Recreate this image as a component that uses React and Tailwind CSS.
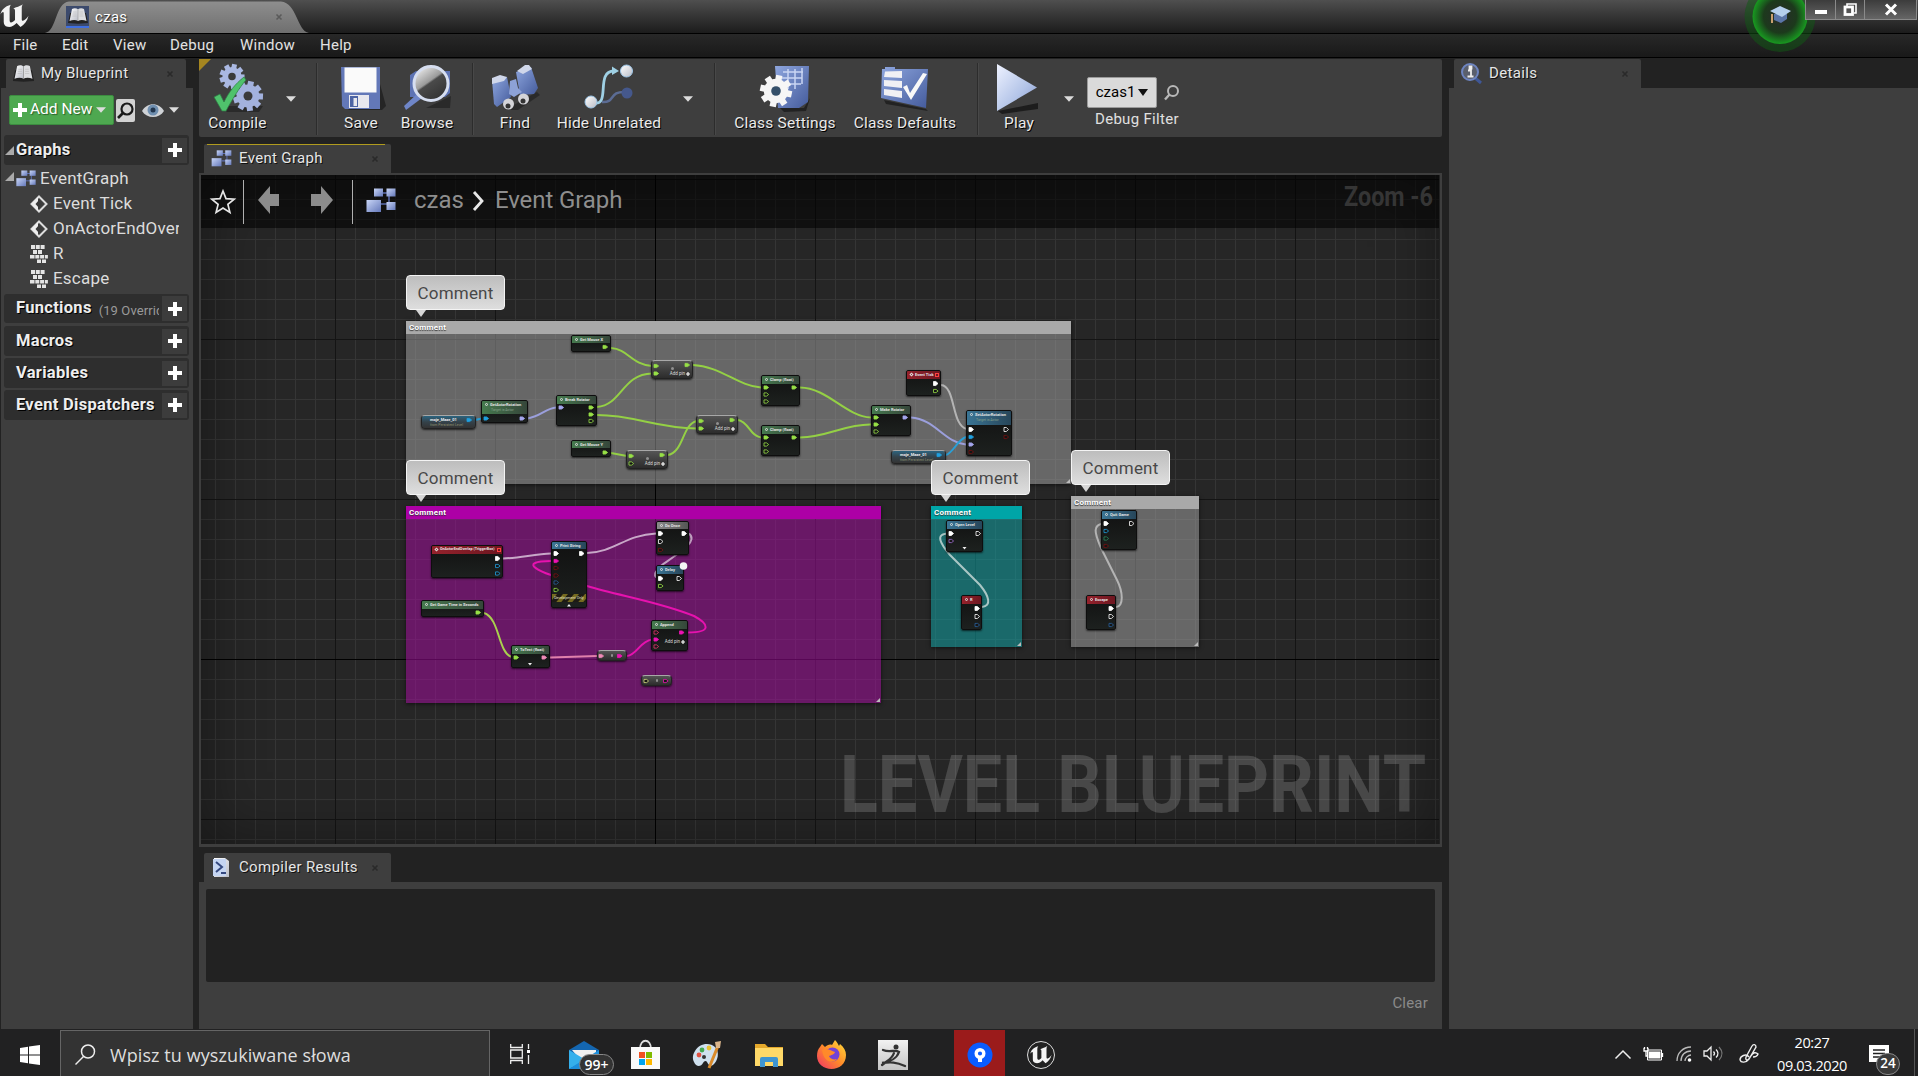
import React from "react";

/* ---------- shared glyphs ---------- */
const Svg = ({ w, h, vb, children, className = "" }) => (
  <svg width={w} height={h} viewBox={vb || `0 0 ${w} ${h}`} className={`block shrink-0 overflow-visible ${className}`}>
    {children}
  </svg>
);

const Defs = () => (
  <svg width="0" height="0" className="absolute">
    <defs>
      <linearGradient id="blue" x1="0" y1="0" x2="1" y2="1">
        <stop offset="0" stopColor="#c9d6f7" />
        <stop offset="1" stopColor="#6478ba" />
      </linearGradient>
      <linearGradient id="deep" x1="0" y1="0" x2="1" y2="1">
        <stop offset="0" stopColor="#8ea6de" />
        <stop offset="1" stopColor="#445b9c" />
      </linearGradient>
      <linearGradient id="white" x1="0" y1="0" x2="1" y2="1">
        <stop offset="0" stopColor="#ffffff" />
        <stop offset="1" stopColor="#b9bcc6" />
      </linearGradient>
      <linearGradient id="play" x1="0" y1="0" x2="1" y2="1">
        <stop offset="0" stopColor="#eef2ff" />
        <stop offset="0.6" stopColor="#b3c4e8" />
        <stop offset="1" stopColor="#8497cc" />
      </linearGradient>
      <linearGradient id="lens" x1="0" y1="0" x2="0.7" y2="1">
        <stop offset="0" stopColor="#ffffff" />
        <stop offset="0.5" stopColor="#9a9a9a" />
        <stop offset="0.55" stopColor="#4a4a4a" />
        <stop offset="1" stopColor="#333" />
      </linearGradient>
      <radialGradient id="glow">
        <stop offset="0" stopColor="#2a2a2a" />
        <stop offset="0.6" stopColor="#1c3a1c" />
        <stop offset="1" stopColor="#189a20" />
      </radialGradient>
      <linearGradient id="fox" x1="1" y1="0" x2="0" y2="1">
        <stop offset="0" stopColor="#ffe03a" />
        <stop offset="0.5" stopColor="#ff8a2a" />
        <stop offset="1" stopColor="#f0306a" />
      </linearGradient>
      <pattern id="stripes" width="11" height="8" patternUnits="userSpaceOnUse" patternTransform="skewX(-40)">
        <rect width="11" height="8" fill="#1d1a14" />
        <rect width="5" height="8" fill="#756a20" />
      </pattern>
    </defs>
  </svg>
);

const Arrow = ({ className = "" }) => (
  <Svg w={10} h={6} className={className}>
    <path d="M0 0.3h10L5 5.8z" fill="#dcdcdc" />
  </Svg>
);

const Plus = ({ s = 14 }) => (
  <Svg w={s} h={s} vb="0 0 14 14">
    <path d="M5 0h4v5h5v4H9v5H5V9H0V5h5z" fill="#fff" />
  </Svg>
);

const UMark = ({ w, h }) => (
  <Svg w={w} h={h} vb="0 0 28 24">
    <path
      d="M0.5 11C1 7 4.500 3 10.500 1.500C9.500 3 9.300 4 9.300 6V16.500C9.300 18.300 10.300 19 11.600 18.600C12.800 18.200 13.700 17.400 14.500 16.400V7.500C14.500 6 13.700 5.500 12.800 5.600C14.500 4 18.500 3.800 22 1.200C21.200 2.600 21 3.800 21 5V15.500C21 17 22 17.400 23.200 16.700C24.800 15.900 26.200 14.500 27.500 12.300C26.400 17.500 23.400 20.800 19.800 23L16 19.200C13.800 21.700 10.800 23.400 7.400 22.900C4.600 22.400 3.600 20.600 3.600 18V9.800C3.600 8 2 8.300 0.500 11Z"
      fill="#f4f4f4"
    />
  </Svg>
);

const Blocks = ({ w = 21, h = 17 }) => (
  <Svg w={w} h={h} vb="0 0 30 25">
    <path d="M13 5h14M15 16h12M23 8v10" stroke="#5c6db0" strokeWidth="1.500" />
    <rect x="8" y="0.500" width="9" height="8" fill="url(#blue)" />
    <rect x="20.500" y="0.500" width="9" height="8" fill="url(#blue)" />
    <rect x="0.500" y="12" width="14.500" height="12" fill="url(#blue)" />
    <rect x="20.500" y="14" width="9" height="8" fill="url(#blue)" />
  </Svg>
);

const Book = ({ w = 18, h = 16 }) => (
  <Svg w={w} h={h} vb="0 0 18 16">
    <path d="M-1 15L1 5L9 4.500L17 5L19 15L9 15.800z" fill="#222" />
    <path d="M3 1C5 -0.300 7.500 0 9 1.300V13C7 11.700 3.500 11.700 0.500 13z" fill="url(#white)" />
    <path d="M15 1C13 -0.300 10.500 0 9 1.300V13C11 11.700 14.500 11.700 17.500 13z" fill="#dcdde0" />
    <path d="M4 4h3.500M3.700 6h3.800M3.500 8h4M10.500 4H14M10.500 6h3.700M10.500 8h4" stroke="#b4b4b4" strokeWidth="0.500" />
    <path d="M9 1.300v11.700" stroke="#999" strokeWidth="0.600" />
  </Svg>
);

const Cross = ({ c = "#2a2a2a" }) => (
  <Svg w={6} h={6}>
    <path d="M0.500 0.500l5 5M5.500 0.500l-5 5" stroke={c} strokeWidth="1.600" />
  </Svg>
);

const Gear = ({ cx, cy, r, fill, hole = "#3a3a3a", n = 8 }) => (
  <g>
    {Array.from({ length: n }, (_, i) => (
      <rect key={i} x={cx - r * 0.2} y={cy - r} width={r * 0.4} height={r} fill={fill} transform={`rotate(${(i * 360) / n + 12} ${cx} ${cy})`} />
    ))}
    <circle cx={cx} cy={cy} r={r * 0.76} fill={fill} />
    <circle cx={cx} cy={cy} r={r * 0.3} fill={hole} />
  </g>
);

/* ---------- toolbar icons ---------- */
const icons = {
  compile: (
    <Svg w={50} h={48}>
      <path d="M8 42h42l-4 6H14z" fill="#222" opacity="0.7" />
      <Gear cx={19} cy={12.500} r={12.500} fill="#aab8e2" n={9} />
      <Gear cx={35} cy={32} r={15} fill="#a3b2de" n={9} />
      <path d="M1 33l6-3 4 8C16 28 22 20 31 13l2 3C26 24 19 36 13 47H9z" fill="#4fc26c" stroke="#2b7d42" strokeWidth="0.700" />
    </Svg>
  ),
  save: (
    <Svg w={46} h={48}>
      <path d="M40 20l6 22-4 4H8z" fill="#1f1f1f" opacity="0.8" />
      <path d="M1 3h39v42H5l-3-3z" fill="#6378b8" />
      <rect x="4.500" y="3.500" width="32" height="25" fill="#fafafa" />
      <rect x="9" y="31" width="20" height="13" fill="#e8e8ee" />
      <rect x="10" y="32" width="8" height="11" fill="#4d64a4" />
      <rect x="13.500" y="34" width="3.500" height="8" fill="#e8e8ee" />
    </Svg>
  ),
  browse: (
    <Svg w={50} h={48}>
      <path d="M24 44h24l1-12z" fill="#222" opacity="0.7" />
      <path d="M8 11l6-4h34v22l-5 4H8z" fill="#5d73b4" />
      <path d="M16 29L2 42l2 4L20 34z" fill="#6f86c8" />
      <circle cx="29" cy="19.500" r="17" fill="url(#lens)" stroke="#d6def0" strokeWidth="3" />
    </Svg>
  ),
  find: (
    <Svg w={50} h={48}>
      <path d="M14 46l32-18 3 3-22 15z" fill="#222" opacity="0.7" />
      <path d="M1 16l15-3 4 20-14 10-3-3z" fill="url(#deep)" />
      <path d="M25 8l15-5 7 21-4 6-14 1z" fill="url(#deep)" />
      <path d="M1 14l8-3 7 2-3 4-12 3z" fill="#d0d7ea" />
      <path d="M26 7l8-6h4l3 4-9 5z" fill="#d0d7ea" />
      <path d="M19 17l6-2 2 9 4 4-8 5-5-3z" fill="#8da2d6" />
      <circle cx="17.500" cy="40" r="5.500" fill="#d4d4d8" /><circle cx="17" cy="42" r="2.500" fill="#333" />
      <circle cx="32.500" cy="35" r="5.500" fill="#d4d4d8" /><circle cx="32" cy="37" r="2.500" fill="#333" />
    </Svg>
  ),
  hide: (
    <Svg w={50} h={48}>
      <path d="M18 38c14 1 6-11 24-10" fill="none" stroke="#5b6c94" strokeWidth="2.500" />
      <circle cx="43" cy="29" r="5.500" fill="#45588c" />
      <path d="M10 39C27 42 11 7 30 7" fill="none" stroke="#9fd0e4" strokeWidth="2.800" />
      <path d="M28 2.500l7 4.500-7 4z" fill="#9fd0e4" />
      <circle cx="42.500" cy="7" r="6" fill="url(#white)" stroke="#9cc6e8" />
      <circle cx="7" cy="38" r="6" fill="url(#white)" stroke="#9cc6e8" />
    </Svg>
  ),
  settings: (
    <Svg w={50} h={48}>
      <path d="M20 44h24l6-10-4 13-22 1z" fill="#222" />
      <path d="M15 2h34l-1 36-9 6H18z" fill="url(#deep)" />
      <path d="M23 8h20M22 14h20M22 20h19M28 5v20M35 5v20M42 4v16" stroke="#c9d5f3" strokeWidth="1.500" />
      <Gear cx={16} cy={27} r={16} fill="#f6f6f6" hole="#35506a" />
    </Svg>
  ),
  defaults: (
    <Svg w={50} h={48}>
      <path d="M4 36l42 9 2 2-42-7z" fill="#222" />
      <path d="M2 5h3V3h10v2h33l-2 39L1 34z" fill="url(#deep)" />
      <path d="M5 7.500l17-0.500v7l-18-1zM4 16l18 1v7L4 22zM4 25l18 2v7L4 31z" fill="#f0f0f4" />
      <path d="M23 23l4-2 3 8L43 9l4 1-16 26z" fill="#f8f8f8" />
    </Svg>
  ),
  play: (
    <Svg w={46} h={50}>
      <path d="M4 47L44 39v6L8 50z" fill="#1d1d1d" />
      <path d="M3 0L43 23.500L3 47z" fill="url(#play)" />
    </Svg>
  ),
};

/* ---------- chrome ---------- */
const TitleBar = () => (
  <div className="relative flex h-[33px] items-start bg-gradient-to-b from-[#4f4f4f] to-[#1c1c1c]">
    <div className="pt-[3px]"><UMark w={29} h={25} /></div>
    <div className="relative ml-4 mt-[1px] flex h-8 w-[264px] items-center">
      <Svg w={264} h={32} className="absolute left-0 top-0">
        <linearGradient id="tabg" x1="0" y1="0" x2="0" y2="1">
          <stop offset="0" stopColor="#8e8e8e" />
          <stop offset="1" stopColor="#6f6f6f" />
        </linearGradient>
        <path d="M0 32C12 30 10 2 24 0.500H236C252 2 252 30 264 32z" fill="url(#tabg)" />
      </Svg>
      <div className="relative ml-[21px] flex h-[22px] w-[23px] items-center justify-center border-b-2 border-[#3f6fe0] bg-[#3c4a6c]"><Book w={18} h={16} /></div>
      <span className="relative ml-[6px] text-[15px] tracking-[0.3px] text-white [text-shadow:1px_1px_1px_#222]">czas</span>
      <div className="relative ml-auto mr-[27px]"><Cross c="#5a5a5a" /></div>
    </div>
    <div className="ml-auto flex h-5">
      <div className="relative z-10 flex h-5 w-[31px] items-center justify-center border border-t-0 border-[#8a8a8a] bg-gradient-to-b from-[#3c3c3c] to-[#666]"><div className="mt-1 h-[4px] w-3 bg-white" /></div>
      <div className="flex h-5 w-[29px] items-center justify-center border border-l-0 border-t-0 border-[#8a8a8a] bg-gradient-to-b from-[#3c3c3c] to-[#666]">
        <Svg w={14} h={14}>
          <path d="M4 3V1h9v9h-2" fill="none" stroke="#fff" strokeWidth="1.600" />
          <rect x="2" y="4" width="7.500" height="7.500" fill="none" stroke="#fff" strokeWidth="2.800" />
        </Svg>
      </div>
      <div className="mr-[1px] flex h-5 w-[52px] items-center justify-center border border-l-0 border-t-0 border-[#8a8a8a] bg-gradient-to-b from-[#3c3c3c] to-[#666]">
        <Svg w={12} h={11}><path d="M1 0.500l10 10M11 0.500l-10 10" stroke="#fff" strokeWidth="3" /></Svg>
      </div>
    </div>
    <div className="absolute right-[102px] top-0 h-[54px] w-[72px] overflow-hidden">
      <svg width="72" height="54" viewBox="0 0 72 54">
        <circle cx="36" cy="16.500" r="35.500" fill="#0f5a14" opacity="0.5" />
        <circle cx="36" cy="16.500" r="27.500" fill="url(#glow)" />
        <path d="M28 23v-9" stroke="#c9a070" strokeWidth="2" />
        <path d="M30 14v6l7 3 6-4v-5z" fill="#5b76a8" />
        <path d="M26 11l10-5 11 5-9 6z" fill="#b5d0ee" />
      </svg>
    </div>
  </div>
);

const MENU = [
  ["File", "w-[49px]"],
  ["Edit", "w-[51px]"],
  ["View", "w-[57px]"],
  ["Debug", "w-[70px]"],
  ["Window", "w-[80px]"],
  ["Help", "w-[60px]"],
];

const DockTab = ({ icon, label, width, active }) => (
  <div className={`relative flex h-[29px] items-center rounded-t-[2px] bg-[#3e3e3e] ${width}`}>
    {active && <div className="absolute left-[3px] right-[6px] top-0 h-[1px] bg-[#b09b1e]" />}
    <div className="ml-[7px] flex w-[21px] justify-center">{icon}</div>
    <span className="ml-[7px] whitespace-nowrap text-[15px] tracking-[0.33px] text-[#e6e6e6] [text-shadow:1px_1px_0_#111]">{label}</span>
    <div className="ml-auto mr-[13px]"><Cross /></div>
  </div>
);

const Section = ({ label, extra, open, className = "" }) => (
  <div className={`ml-[3px] mr-1 flex items-center rounded-[3px] bg-[#2e2e2e] ${className}`}>
    <div className="w-3 shrink-0">{open && <Svg w={9} h={9} className="ml-[1px]"><path d="M9 0v9H0z" fill="#aaa" /></Svg>}</div>
    <span className="whitespace-nowrap text-[16.500px] font-bold tracking-[0.3px] text-[#eee] [text-shadow:1px_1px_0_#000]">{label}</span>
    {extra && <span className="ml-[7px] mt-1 w-[60px] overflow-hidden whitespace-nowrap text-[13px] tracking-[0.1px] text-[#9a9a9a]">{extra}</span>}
    <div className="ml-auto mr-[2px] flex h-[25px] w-[25px] shrink-0 items-center justify-center bg-[#3c3c3c]"><Plus /></div>
  </div>
);

const Diamond = () => (
  <Svg w={18} h={18}>
    <path d="M9 1.500L16.500 9L9 16.500L1.500 9z" fill="none" stroke="#ddd" strokeWidth="2" />
    <path d="M8 2L1.500 9L8 16z" fill="#eee" /><path d="M9 5L13 9L9 13L5.500 9z" fill="#3a3a3a" />
  </Svg>
);
const Keys = () => (
  <Svg w={18} h={18}>
    <path d="M1 0h4v4H1zM5.800 0h4v4h-4zM10.600 0h4v4h-4zM3 5h4v4H3zM8 5h4v4H8zM0 10h4.500v3.600H0zM5.300 10h4v3.600h-4zM10.100 10h4v3.600h-4zM14.900 10h3v3.600h-3zM7 14.500h4v3.500H7zM12 14.500h4v3.500h-4z" fill="#e4e4e4" />
  </Svg>
);

const LeftPanel = () => (
  <div className="flex w-[193px] shrink-0 flex-col pl-[1px] pt-[1px]">
    <div className="pl-[5px]"><DockTab width="w-[180px]" label="My Blueprint" icon={<Book w={19} h={17} />} /></div>
    <div className="flex flex-1 flex-col bg-[#3e3e3e]">
      <div className="mt-[7px] flex h-[30px] items-center pl-2">
        <div className="flex h-[30px] w-[105px] items-center rounded-[2px] border border-[#3c8c40] bg-[#4ea850] pl-[3px]">
          <Plus />
          <span className="ml-[3px] whitespace-nowrap text-[15.500px] text-white [text-shadow:1px_1px_1px_#2a602a]">Add New</span>
          <Arrow className="ml-[4px]" />
        </div>
        <div className="ml-[2px] flex h-[23px] w-[19px] items-center justify-center rounded-[2px] bg-[#d2d2d2]">
          <Svg w={17} h={17}><circle cx="10" cy="7" r="5.500" fill="none" stroke="#1a1a1a" strokeWidth="2.200" /><path d="M6 11l-5 5" stroke="#1a1a1a" strokeWidth="2.600" /></Svg>
        </div>
        <Svg w={22} h={15} className="ml-[7px]">
          <path d="M0 8C5-1 17-1 22 8C17 16 5 16 0 8z" fill="#cfd2d6" /><circle cx="11" cy="7" r="5.500" fill="#6f8fb0" /><circle cx="11" cy="7" r="2.500" fill="#22364e" />
        </Svg>
        <Arrow className="ml-[5px]" />
      </div>
      <Section label="Graphs" open className="mt-[10px] h-[30px]" />
      <div className="flex h-[129px] flex-col pt-[1px]">
        <div className="flex h-[25px] items-center pl-[4px]">
          <Svg w={9} h={9} className="mb-1"><path d="M9 0v9H0z" fill="#aaa" /></Svg>
          <div className="ml-[2px]"><Blocks w={20} h={17} /></div>
          <span className="ml-[4px] text-[17px] tracking-[0.2px] text-[#dcdcdc]">EventGraph</span>
        </div>
        {[["Event Tick", 0], ["OnActorEndOverlap", 0], ["R", 1], ["Escape", 1]].map(([t, k]) => (
          <div key={t} className="flex h-[25px] items-center pl-[29px]">
            {k ? <Keys /> : <Diamond />}
            <span className="ml-[5px] w-[126px] overflow-hidden whitespace-nowrap text-[17px] tracking-[0.2px] text-[#dcdcdc]">{t}</span>
          </div>
        ))}
      </div>
      <Section label="Functions" extra="(19 Overridable)" className="h-[29px]" />
      <Section label="Macros" className="mt-[3px] h-[30px]" />
      <Section label="Variables" className="mt-[2px] h-[30px]" />
      <Section label="Event Dispatchers" className="mt-[2px] h-[30px]" />
    </div>
  </div>
);

const Tool = ({ icon, label, className, pad = "" }) => (
  <div className={`flex shrink-0 flex-col items-center ${className}`}>
    <div className={`flex h-[56px] items-start pt-[5px] ${pad}`}>{icons[icon]}</div>
    <span className="-mt-[2px] h-5 whitespace-nowrap text-[15.500px] leading-5 tracking-[0.2px] text-[#eaeaea] [text-shadow:1px_1px_0_#000]">{label}</span>
  </div>
);
const Sep = ({ className = "" }) => <div className={`mt-1 h-[72px] w-[2px] shrink-0 border-r border-[#484848] bg-[#2c2c2c] ${className}`} />;

const Toolbar = () => (
  <div className="relative flex h-[78px] items-start rounded-[2px] bg-[#3e3e3e]">
    <Svg w={12} h={12} className="absolute left-0 top-0"><path d="M0 0h12L0 12z" fill="#a58620" /></Svg>
    <Tool icon="compile" label="Compile" className="ml-[4px] w-[69px]" />
    <Arrow className="ml-[14px] mt-[37px]" />
    <Sep className="ml-[20px]" />
    <Tool icon="save" label="Save" className="ml-[12px] w-[62px]" pad="pl-[4px]" />
    <Tool icon="browse" label="Browse" className="w-[70px]" />
    <Sep className="ml-[10px]" />
    <Tool icon="find" label="Find" className="ml-[11px] w-[60px]" pad="pl-[2px]" />
    <Tool icon="hide" label="Hide Unrelated" className="ml-[3px] w-[122px]" />
    <Arrow className="ml-[13px] mt-[37px]" />
    <Sep className="ml-[21px]" />
    <Tool icon="settings" label="Class Settings" className="ml-[9px] w-[120px]" />
    <Tool icon="defaults" label="Class Defaults" className="w-[120px]" />
    <Sep className="ml-[12px]" />
    <Tool icon="play" label="Play" className="ml-[8px] w-[64px]" pad="pr-[4px]" />
    <Arrow className="ml-[13px] mt-[37px]" />
    <div className="ml-[13px] mt-[18px] flex flex-col">
      <div className="flex items-center">
        <div className="flex h-[31px] w-[70px] items-center justify-center gap-[3px] rounded-[2px] border border-[#9a9a9a] bg-[#dadada] text-[15px] text-black">
          czas1
          <Svg w={10} h={7}><path d="M0 0h10L5 7z" fill="#111" /></Svg>
        </div>
        <Svg w={15} h={16} className="ml-[7px]"><circle cx="9" cy="6" r="5" fill="none" stroke="#b8b8b8" strokeWidth="2" /><path d="M5.500 9.500l-4.500 5" stroke="#b8b8b8" strokeWidth="2.400" /></Svg>
      </div>
      <span className="ml-[8px] mt-[2px] whitespace-nowrap text-[15px] leading-[18px] tracking-[0.3px] text-[#e0e0e0]">Debug Filter</span>
    </div>
  </div>
);

/* ---------- graph ---------- */
const OX = 201;
const OY = 175;

const C = {
  g: "#97e046", w: "#ffffff", b: "#1fa0e0", l: "#a4a6ee", r: "#7a1010", m: "#ee12b4", p: "#f08ab8", n: "#2a62a0", y: "#d8e080", t: "#2a8a60", v: "#a070d0", k: "#e83870",
};

const HEAD = {
  green: "bg-gradient-to-r from-[#457a4e] to-[#35463a]",
  blue: "bg-gradient-to-r from-[#3a7595] to-[#27465a]",
  red: "bg-gradient-to-r from-[#95222c] to-[#6d1620]",
  gray: "bg-gradient-to-r from-[#8a8a8a] to-[#555]",
};

const COMMENTS = [
  { x: 406, y: 321, w: 665, h: 163, head: "bg-[#a9a9a9]", body: "bg-[#a8a8a8]/50", bx: 406, by: 275 },
  { x: 406, y: 505.5, w: 475, h: 197, head: "bg-[#ad00a6]", body: "bg-[#a00c9a]/55", bx: 406, by: 460 },
  { x: 931, y: 505.5, w: 90.5, h: 141, head: "bg-[#00a5a7]", body: "bg-[#10a0a2]/55", bx: 931, by: 460 },
  { x: 1071, y: 495.5, w: 127.5, h: 151, head: "bg-[#a9a9a9]", body: "bg-[#a8a8a8]/50", bx: 1071, by: 450 },
];

/* Pins: [x, y, colour, hollow]; coordinates are in canvas space. */
const NODES = [
  { x: 571, y: 335, w: 40, h: 17, hd: 7, c: "green", t: "Get Mouse X", pins: [[605, 347, "g"]] },
  { x: 651, y: 360, w: 42, h: 19, add: 1, pins: [[656, 366, "g"], [656, 373.5, "g"], [687, 365, "g"]] },
  { x: 481, y: 400, w: 47, h: 23, hd: 13, c: "green", t: "GetActorRotation", sub: "Target is Actor", pins: [[486, 418.5, "b"], [522, 418.5, "l"]] },
  { x: 421, y: 415, w: 55, h: 14, vr: 1, t: "moje_Maze_01", sub: "from Persistent Level", pins: [[469, 420, "b"]] },
  { x: 556, y: 395, w: 41, h: 31, hd: 8, c: "green", t: "Break Rotator", pins: [[561, 407.5, "l"], [591, 407.5, "g"], [591, 414.5, "g"], [591, 421, "g", 1]] },
  { x: 571, y: 440, w: 40, h: 17, hd: 7, c: "green", t: "Get Mouse Y", pins: [[605, 452.5, "g"]] },
  { x: 626, y: 450, w: 42, h: 19, add: 1, pins: [[631, 456, "g"], [631, 463.5, "g", 1], [662, 455, "g"]] },
  { x: 696, y: 415, w: 42, h: 19, add: 1, pins: [[701, 421, "g"], [701, 428.5, "g"], [732, 420, "g"]] },
  { x: 761, y: 375, w: 39, h: 31, hd: 8, c: "green", t: "Clamp (float)", pins: [[766, 387.5, "g"], [766, 394.5, "g", 1], [766, 401.5, "g", 1], [794, 387.5, "g"]] },
  { x: 761, y: 425, w: 39, h: 31, hd: 8, c: "green", t: "Clamp (float)", pins: [[766, 437.5, "g"], [766, 444.5, "g", 1], [766, 451.5, "g", 1], [794, 437.5, "g"]] },
  { x: 871, y: 405, w: 40, h: 31, hd: 8, c: "green", t: "Make Rotator", pins: [[876, 417.5, "g"], [876, 424.5, "g"], [876, 431.5, "g", 1], [905, 417.5, "l"]] },
  { x: 906, y: 370, w: 35, h: 26, hd: 8, c: "red", t: "Event Tick", tick: 1, pins: [[935.5, 383.5, "w"], [935.5, 391, "g", 1]] },
  { x: 891, y: 450, w: 55, h: 14, vr: 1, t: "moje_Maze_01", sub: "from Persistent Level", pins: [[939, 455, "b"]] },
  { x: 966, y: 409.5, w: 46, h: 46, hd: 14, c: "blue", t: "SetActorRotation", sub: "Target is Actor", pins: [[971, 429.5, "w"], [971, 437, "b"], [971, 444.5, "l"], [971, 452, "r", 1], [1006, 429.5, "w", 1], [1006, 437, "r", 1]] },
  { x: 431, y: 545, w: 72, h: 33, hd: 8, c: "red", t: "OnActorEndOverlap (TriggerBox)", tick: 1, long: 1, pins: [[497.5, 558.5, "w"], [497.5, 566, "b", 1], [497.5, 573.5, "b", 1]] },
  { x: 421, y: 600, w: 63, h: 17, hd: 8, c: "green", t: "Get Game Time in Seconds", pins: [[478, 612.5, "g"]] },
  { x: 551, y: 541, w: 36, h: 67, hd: 7, c: "blue", t: "Print String", dev: 1, pins: [[556, 553.5, "w"], [556, 561, "m"], [556, 568, "r", 1], [556, 575.5, "r", 1], [556, 582.5, "n", 1], [556, 590, "g", 1], [581.5, 553.5, "w"]] },
  { x: 511, y: 645, w: 39, h: 23, hd: 8, c: "green", t: "ToText (float)", pins: [[516, 657.5, "g"], [544, 657.5, "p"]] },
  { x: 656, y: 521, w: 33, h: 34, hd: 7, c: "gray", t: "Do Once", pins: [[660.5, 533.5, "w"], [660.5, 541.5, "w", 1], [660.5, 550, "r", 1], [684, 533.5, "w"]] },
  { x: 656, y: 565, w: 28, h: 26, hd: 8, c: "blue", t: "Delay", pins: [[660.5, 578.5, "w"], [660.5, 586, "g", 1], [679, 578.5, "w", 1]] },
  { x: 651, y: 620, w: 37, h: 31, hd: 8, c: "green", t: "Append", pin: 1, pins: [[656, 632.5, "k", 1], [656, 639.5, "m"], [656, 646.5, "k", 1], [681.5, 632.5, "m"]] },
  { x: 597, y: 650, w: 30, h: 11, cv: 1, pins: [[601, 656, "p"], [619.5, 656, "m"]] },
  { x: 641, y: 675, w: 31, h: 11, cv: 1, pins: [[646, 681, "y", 1], [665.5, 681, "m", 1]] },
  { x: 946, y: 520, w: 37, h: 32, hd: 8, c: "blue", t: "Open Level", pins: [[951, 533.5, "w"], [951, 541, "v", 1], [978, 533.5, "w", 1]] },
  { x: 961, y: 595, w: 21, h: 35, hd: 8, c: "red", t: "R", pins: [[977, 608.5, "w"], [977, 616.5, "w", 1], [977, 625, "n", 1]] },
  { x: 1101, y: 510, w: 36, h: 40, hd: 8, c: "blue", t: "Quit Game", pins: [[1106, 523.5, "w"], [1106, 531, "b", 1], [1106, 538.5, "t", 1], [1106, 546, "r", 1], [1131.5, 523.5, "w", 1]] },
  { x: 1086, y: 595, w: 30, h: 35, hd: 8, c: "red", t: "Escape", pins: [[1111, 608.5, "w"], [1111, 616.5, "w", 1], [1111, 625, "n", 1]] },
];

const WIRES = [
  ["M611 348C628 349 632 365 652 366", "#94d045"],
  ["M597 407C622 405 622 374 652 373.500", "#94d045"],
  ["M597 415C635 415 655 428 697 428.500", "#94d045"],
  ["M611 453L627 456", "#94d045"],
  ["M668 455C684 452 682 424 697 421", "#94d045"],
  ["M693 365C720 366 738 386 761 387.500", "#94d045"],
  ["M738 420C749 422 750 436 761 437.500", "#94d045"],
  ["M800 387.500C828 388 845 416 871 417.500", "#94d045"],
  ["M800 437.500C828 437 845 424 871 424.500", "#94d045"],
  ["M475 420L482 418.500", "#2a9fd6"],
  ["M527 418.500C540 417 546 408 556 407.500", "#9b9fdc"],
  ["M911 417.500C935 419 945 443 966 444.500", "#9b9fdc"],
  ["M946 455C954 452 958 439 966 437", "#2a9fd6"],
  ["M941 385C956 386 951 426 967 429", "#b4b4b4"],
  ["M503 558.500C520 558 535 554 551 553.500", "#c8a8c8"],
  ["M587 553C615 552 625 535 656 533.500", "#c8a8c8"],
  ["M689 533.500C698 541 682 551 662 565C654 572 653 577 659 578.500", "#c0a0c0"],
  ["M688 632.500C712 632.500 709 624 694 616C660 602 620 596 587 586L551 575C536 570 530 565 535 563C540 560.500 547 561 556 561", "#e612ae"],
  ["M484 613C500 618 498 654 512 657", "#a9d04e"],
  ["M550 657.500L597 656", "#e080ac"],
  ["M627 656C637 655 640 641 652 639.500", "#e612ae"],
  ["M982 607C992 606 989 596 980 585L950 555C940 543 935 534 948 533.500", "#a9c6c4"],
  ["M1116 607C1124 606 1123 592 1117 580L1101 548C1094 532 1093 525 1103 523.500", "#b4b4b4"],
];

const Pin = ({ x, y, c, hollow }) => (
  <path
    d={c === C.w ? `M${x - 2} ${y - 2}h2.300l2.200 2l-2.200 2h-2.300z` : `M${x - 2} ${y - 1.600}h2.600l2 1.600l-2 1.600h-2.600z`}
    fill={hollow ? "#151515" : c}
    stroke={c}
    strokeWidth="0.800"
  />
);

const Node = ({ n }) => {
  const shape = n.vr || n.add || n.cv ? "rounded-[4px] border border-[#222] border-t-[#a8a8a8] bg-gradient-to-b from-[#555] to-[#2c2c2c]" : "rounded-[2px] bg-gradient-to-b from-[#111] to-[#1d211f] border border-[#0e0e0e]";
  return (
    <div className={`absolute overflow-visible shadow-[0_1px_2px_#000000aa] ${shape}`} style={{ left: n.x - OX, top: n.y - OY, width: n.w, height: n.h }}>
      {n.hd && (
        <div className={`rounded-t-[1px] ${HEAD[n.c]}`} style={{ height: n.hd }}>
          <div className="flex h-[7px] items-center pl-[3px]">
            <span className={`mr-[2px] h-[3px] w-[3px] shrink-0 border border-[#dedede] ${n.tick ? "rotate-45" : "rounded-full"}`} />
            <span className={`whitespace-nowrap font-bold leading-[7px] text-[#e4e4e4] ${n.long ? "text-[3.700px]" : "text-[4px]"}`}>{n.t}</span>
            {n.tick && <span className="ml-auto mr-[1px] h-[4px] w-[4px] shrink-0 border border-[#ff4040]" />}
          </div>
          {n.sub && <div className="whitespace-nowrap pl-[9px] text-[3.500px] leading-[5px] text-[#86a08a]">{n.sub}</div>}
        </div>
      )}
      {n.vr && (
        <div className="h-full rounded-[3px] bg-gradient-to-b from-[#2a6480] via-[#34424a] to-[#333] pl-2">
          <div className="whitespace-nowrap pt-[1px] text-[4px] font-bold leading-[6px] text-[#eee]">{n.t}</div>
          <div className="whitespace-nowrap text-[3.500px] leading-[4px] text-[#8f8f70]">{n.sub}</div>
        </div>
      )}
      {n.add && (
        <div className="flex h-full flex-col items-center justify-end">
          <span className="h-[3px] w-[3px] rounded-full bg-[#909090]" />
          <span className="flex w-full items-center justify-end gap-[1px] pr-[2px] text-[4.500px] leading-[8px] text-[#ddd]">Add pin <Plus s={4} /></span>
        </div>
      )}
      {n.cv && <div className="mx-auto mt-[3px] h-[3px] w-[2px] rounded-full bg-[#909090]" />}
      {n.pin && <div className="mt-[9px] flex items-center justify-end gap-[1px] pr-[2px] text-[4.500px] leading-[8px] text-[#ddd]">Add pin <Plus s={4} /></div>}
      {n.dev && (
        <div className="relative mt-[45px] h-[8px] w-full">
          <svg width="34" height="8" className="absolute left-0 top-0"><rect width="34" height="8" fill="url(#stripes)" /></svg>
          <span className="relative block whitespace-nowrap text-center text-[3.700px] leading-[8px] text-[#e8e8c8]">Development Only</span>
        </div>
      )}
    </div>
  );
};

const Bubble = ({ x, y }) => (
  <div className="absolute h-[35px] w-[99px]" style={{ left: x - OX, top: y - OY }}>
    <div className="flex h-[35px] items-center justify-center rounded-[4px] border border-[#f4f4f4] bg-gradient-to-b from-[#bdbdbd] to-[#dedede] pt-[2px] text-[17px] tracking-[0.2px] text-[#484848]">Comment</div>
    <Svg w={10} h={7} className="absolute left-[10px] top-[35px]"><path d="M0 0h10L5 7z" fill="#d6d6d6" /></Svg>
  </div>
);

const verticals = Array.from({ length: 62 }, (_, i) => 215 + i * 20);
const horizontals = Array.from({ length: 34 }, (_, i) => 179 + i * 20);

const Graph = () => (
  <div className="relative h-[669px] w-[1238px] overflow-hidden bg-[#262626]">
    <svg width="1238" height="669" viewBox="201 175 1238 669" className="absolute left-0 top-0">
      {verticals.map((x) => <rect key={x} x={x} y="175" width="1" height="669" fill="#353535" />)}
      {horizontals.map((y) => <rect key={y} x="201" y={y} width="1238" height="1" fill="#353535" />)}
      {[335, 495, 815, 975, 1135, 1295].map((x) => <rect key={x} x={x} y="175" width="1" height="669" fill="#141414" />)}
      {[179, 339, 499, 819].map((y) => <rect key={y} x="201" y={y} width="1238" height="1" fill="#141414" />)}
      <rect x="655" y="175" width="1" height="669" fill="#000" />
      <rect x="201" y="659" width="1238" height="1" fill="#000" />
    </svg>
    <div className="absolute inset-0 shadow-[inset_0_0_60px_#00000066]" />
    <svg width="1238" height="669" viewBox="201 175 1238 669" className="absolute left-0 top-0">
      <text x="840" y="812" fontFamily="Roboto" fontWeight="700" fontSize="80" textLength="586" lengthAdjust="spacingAndGlyphs" fill="#fff" fillOpacity="0.16">LEVEL BLUEPRINT</text>
    </svg>
    {COMMENTS.map((c, i) => (
      <div key={i} className={`absolute shadow-[0_1px_4px_#00000099] ${c.body}`} style={{ left: c.x - OX, top: c.y - OY, width: c.w, height: c.h }}>
        <div className={`h-[13px] pl-[3px] text-[8px] font-bold leading-[14px] tracking-[0.3px] text-white [text-shadow:0_1px_1px_#333] ${c.head}`}>Comment</div>
        <Svg w={4} h={4} className="absolute bottom-[1px] right-[1px]"><path d="M4 0v4H0z" fill="#bbb" /></Svg>
      </div>
    ))}
    <svg width="1238" height="669" viewBox="201 175 1238 669" className="absolute left-0 top-0">
      {WIRES.map(([d, c]) => <path key={d} d={d} fill="none" stroke={c} strokeWidth="2" />)}
    </svg>
    {NODES.map((n, i) => <Node key={i} n={n} />)}
    <svg width="1238" height="669" viewBox="201 175 1238 669" className="absolute left-0 top-0">
      {NODES.flatMap((n) => n.pins.map(([x, y, c, h]) => <Pin key={`${x}-${y}`} x={x} y={y} c={C[c]} hollow={h} />))}
      <circle cx="683.500" cy="566" r="3.800" fill="#f4f4f4" />
      <path d="M528 663h4l-2 2.500zM962.500 547h4l-2 2.500zM567 606.500h4l-2-2.500z" fill="#eee" />
    </svg>
    {COMMENTS.map((c, i) => <Bubble key={i} x={c.bx} y={c.by} />)}
    <div className="relative flex h-[53px] items-center bg-black/55">
      <Svg w={26} h={26} className="ml-[9px]"><path d="M13 2l3 7.600 8.200.600-6.300 5.200 2 8L13 19l-6.900 4.400 2-8L1.800 10.200l8.200-.6z" fill="none" stroke="#e6e6e6" strokeWidth="1.700" /></Svg>
      <div className="ml-[7px] h-11 w-[1px] bg-[#b0b0b0]" />
      <Svg w={21} h={28} className="mb-[3px] ml-[14px]"><path d="M0 14L12 0v8h9v12h-9v8z" fill="#8c8c8c" /></Svg>
      <Svg w={22} h={28} className="mb-[3px] ml-8"><path d="M22 14L10 0v8H0v12h10v8z" fill="#8c8c8c" /></Svg>
      <div className="ml-[19px] h-11 w-[1px] bg-[#b0b0b0]" />
      <div className="mb-[2px] ml-[13px]"><Blocks w={30} h={25} /></div>
      <span className="mb-[3px] ml-[18px] w-[50px] text-[24px] leading-none text-[#8e8e8e]">czas</span>
      <Svg w={12} h={22} className="mb-[2px] ml-[8px]"><path d="M2 2l8 9-8 9" fill="none" stroke="#e8e8e8" strokeWidth="2.800" /></Svg>
      <span className="mb-[4px] ml-[11px] whitespace-nowrap text-[24px] leading-none tracking-[-0.1px] text-[#8e8e8e]">Event Graph</span>
      <svg width="92" height="30" className="mb-4 ml-auto mr-[4px]">
        <text x="1" y="27" fontFamily="Roboto" fontWeight="700" fontSize="28" textLength="89" lengthAdjust="spacingAndGlyphs" fill="#353535">Zoom -6</text>
      </svg>
    </div>
  </div>
);

const Center = () => (
  <div className="ml-[6px] flex w-[1243px] shrink-0 flex-col pt-[1px]">
    <Toolbar />
    <div className="mt-[7px] pl-[5px]"><DockTab active width="w-[187px]" label="Event Graph" icon={<Blocks />} /></div>
    <div className="h-[674px] border-x-2 border-b-[3px] border-t-2 border-[#3e3e3e]"><Graph /></div>
    <div className="mt-[6px] pl-[5px]">
      <DockTab
        width="w-[187px]"
        label="Compiler Results"
        icon={<Svg w={18} h={19} className="-ml-[2px]"><path d="M2 0h11l4 3v16H2z" fill="url(#white)" /><path d="M1 1h13v17H1z" fill="#c5d5f2" /><path d="M4 4l6 5-6 5M9 15h5" fill="none" stroke="#34487f" strokeWidth="2" /></Svg>}
      />
    </div>
    <div className="flex flex-1 flex-col bg-[#3e3e3e] px-[7px] pt-[7px]">
      <div className="h-[93px] rounded-[2px] bg-[#222]" />
      <div className="mt-[11px] flex justify-end pr-[7px] text-[15px] leading-5 tracking-[0.2px] text-[#8a8a8a]">Clear</div>
    </div>
  </div>
);

const Right = () => (
  <div className="ml-[7px] flex flex-1 flex-col pt-[1px]">
    <div className="pl-[5px]">
      <DockTab
        width="w-[187px]"
        label="Details"
        icon={<Svg w={21} h={21}><path d="M13 14l7 6" stroke="#3f5796" strokeWidth="3" /><circle cx="9" cy="9" r="8" fill="#5a5f6c" stroke="#6d84c0" strokeWidth="2" /><path d="M7 7.500h3V13M6.500 13.500h6M8.500 3.500h2v2h-2z" fill="none" stroke="#eee" strokeWidth="1.800" /></Svg>}
      />
    </div>
    <div className="flex-1 bg-[#3e3e3e]" />
  </div>
);

/* ---------- taskbar ---------- */
const Taskbar = () => (
  <div className="flex h-[47px] items-center bg-[#212122] font-['Open_Sans','Noto_Sans',sans-serif] text-white">
    <Svg w={20} h={20} className="ml-5 mt-[5px]"><path d="M0 3l8-1.200v7.700H0zM9 1.600L20 0v9.500H9zM0 10.500h8v7.700L0 17zM9 10.500h11V20L9 18.400z" fill="#fff" /></Svg>
    <div className="ml-5 mt-[1px] flex h-[46px] w-[430px] items-center border border-b-0 border-[#656565] bg-[#333]">
      <Svg w={21} h={21} className="ml-[14px] mt-[2px]"><circle cx="13" cy="7.500" r="6.500" fill="none" stroke="#eee" strokeWidth="1.500" /><path d="M8.500 12.500L0.500 20.500" stroke="#eee" strokeWidth="1.500" /></Svg>
      <span className="ml-[14px] mt-[3px] whitespace-nowrap text-[18px] tracking-[0.080px] text-[#dedede]">Wpisz tu wyszukiwane słowa</span>
    </div>
    <Svg w={20} h={20} className="ml-5 mt-[3px]"><path d="M0.700 0v3.500h11.600V0M0.700 20v-3.500h11.600V20M0.700 6h11.600v8H0.700z" fill="none" stroke="#f0f0f0" strokeWidth="1.300" /><path d="M18.500 0v5M18.500 11v9" stroke="#f0f0f0" strokeWidth="1.300" /><rect x="17" y="6" width="3" height="3" fill="#fff" /></Svg>
    <div className="relative ml-[39px] h-[47px] w-[46px]">
      <Svg w={30} h={28} className="absolute left-0 top-[12px]"><path d="M0 9L15 0l15 9v19H0z" fill="#1466b0" /><path d="M3 9h24v8l-12 6z" fill="#f0f0f0" /><path d="M0 9l17 10L0 28z" fill="#35b0ec" /><path d="M30 9L0 28h30z" fill="#1d8fdc" /></Svg>
      <div className="absolute left-[10px] top-[25px] flex h-[21px] w-[35px] items-center justify-center rounded-full border border-[#888] bg-[#333] text-[14px] font-semibold leading-none">99+</div>
    </div>
    <Svg w={29} h={30} className="ml-4 mt-[5px]"><path d="M9 9C9-2 20-2 20 9" fill="none" stroke="#ddd" strokeWidth="1.800" /><rect x="0" y="7" width="29" height="22" fill="#fafafa" /><path d="M8 12h6v6H8z" fill="#f25022" /><path d="M15 12h6v6h-6z" fill="#7fba00" /><path d="M8 19h6v6H8z" fill="#00a4ef" /><path d="M15 19h6v6h-6z" fill="#ffb900" /></Svg>
    <Svg w={30} h={28} className="ml-[32px] mt-[5px]"><path d="M3 10C7 2 18 1 23 6c5 5 3 14-2 18-3 2-5-1-6-3-1-2-3-1-4 1-2 4-7 4-9-1-2-4-1-8 1-11z" fill="#cfe0ee" /><circle cx="7" cy="14" r="2.400" fill="#e05040" /><circle cx="10" cy="9" r="2.400" fill="#44a850" /><circle cx="17" cy="7" r="2.400" fill="#e8c030" /><circle cx="12" cy="16" r="2" fill="#333" /><path d="M26 5L17 27" stroke="#d98a2b" strokeWidth="3" /><path d="M29 0l-6 1 1 6h4z" fill="#d9b48a" /></Svg>
    <Svg w={28} h={24} className="ml-[33px] mt-[4px]"><path d="M0 1h10l3 3h15v19H0z" fill="#e5a92c" /><rect x="0" y="5" width="28" height="18" fill="#ffd968" /><path d="M5 24v-8q0-2 2-2h14q2 0 2 2v8h-5v-5h-8v5z" fill="#3f95d0" /></Svg>
    <Svg w={29} h={29} className="ml-[34px] mt-[3px]"><path d="M3 7l2-3 3 3c2-2 5-3 7-2l3-5c2 2 3 4 4 6l1-2c4 3 6 7 6 11 0 9-7 14-14.500 14S0 24 0 16c0-4 1-7 3-9z" fill="url(#fox)" /><circle cx="15.500" cy="14.500" r="7" fill="#7242d8" /><path d="M5 10c6-3 9 1 13 2-1 3-4 3-6 4 1 3 5 4 8 3-4 5-13 4-15-9z" fill="#ff8a2a" /></Svg>
    <div className="ml-8 mt-[5px] flex h-[30px] w-[30px] items-center justify-center bg-gradient-to-b from-[#f2f2f2] to-[#c4c4c4]"><Svg w={28} h={28}><circle cx="17" cy="6" r="2.500" fill="#333" /><path d="M4 9c7 3 12-1 16 2-2 6-9 10-17 11 9-1 14-1 23 3M3 24c6-5 10-6 12-12" fill="none" stroke="#333" strokeWidth="2.300" strokeLinecap="round" /></Svg></div>
    <div className="ml-[46px] mt-[1px] flex h-[46px] w-[51px] items-center justify-center bg-[#9b1b1b] pt-[3px]"><Svg w={26} h={26}><circle cx="13" cy="13" r="12.500" fill="#0a5cff" /><circle cx="13" cy="11.500" r="3.800" fill="none" stroke="#fff" strokeWidth="3.400" /><rect x="11" y="15" width="4" height="5" fill="#fff" /></Svg></div>
    <div className="ml-[22px] mt-[4px] flex h-7 w-7 items-center justify-center rounded-full border border-[#ddd] bg-[#222]"><UMark w={22} h={19} /></div>

    <div className="ml-auto flex h-full items-center">
      <Svg w={16} h={9} className="mt-[3px]"><path d="M0.500 8.500L8 1l7.500 7.500" fill="none" stroke="#eee" strokeWidth="1.500" /></Svg>
      <Svg w={20} h={14} className="ml-3 mt-[3px]"><rect x="5.500" y="4.500" width="12" height="7" fill="#fff" /><path d="M4.500 3h14v10h-14z" fill="none" stroke="#fff" /><path d="M19.500 6v4M1 1v3h4V1M3 4v5h2M1.500 0v2M4.500 0v2" fill="none" stroke="#fff" strokeWidth="1.300" /></Svg>
      <Svg w={16} h={16} className="ml-[13px] mt-[3px]"><path d="M1 15C1 7 7 1 15 1M5 15c0-6 4-10 10-10M9 15c0-3 3-6 6-6" fill="none" stroke="#bbb" strokeWidth="1.300" /><circle cx="13.500" cy="14" r="1.800" fill="#fff" /></Svg>
      <Svg w={20} h={16} className="ml-[11px] mt-[3px]"><path d="M1 5h3l4-4v13l-4-4H1z" fill="none" stroke="#eee" strokeWidth="1.300" /><path d="M10.500 5.500q2 2 0 4M13 3.500q4 4 0 8" fill="none" stroke="#eee" strokeWidth="1.300" /><path d="M16 1q6 6.500 0 13" fill="none" stroke="#777" strokeWidth="1.200" /></Svg>
      <Svg w={20} h={20} className="ml-4 mt-[3px]"><path d="M1 16c0-4 6-7 9-3M1 16c1 3 6 3 9-1L17 3c0-3-3-3-4-1L7 13c-1 3 1 4 3 2M12 12c2-4 5-4 7-2-1 3-3 3-5 3" fill="none" stroke="#eee" strokeWidth="1.400" /></Svg>
      <div className="ml-[11px] flex h-[47px] w-[84px] flex-col items-center justify-center pt-[3px] text-[14.500px] leading-[23px] tracking-[-0.400px]"><span>20:27</span><span>09.03.2020</span></div>
      <div className="relative ml-[14px] h-[47px] w-[32px]">
        <Svg w={21} h={21} className="absolute left-[1px] top-[16px]"><path d="M0 0h20v17H0z" fill="#fff" /><path d="M4 5h12M4 8.500h12M4 12h8" stroke="#222" strokeWidth="1.400" /></Svg>
        <div className="absolute left-[8px] top-[24px] flex h-[22px] w-6 items-center justify-center rounded-full border border-[#888] bg-[#3a3a3a] text-[13.500px] font-semibold leading-none">24</div>
      </div>
      <div className="ml-[14px] mr-[3px] h-[47px] w-[1px] bg-[#555]" />
    </div>
  </div>
);

export default function App() {
  return (
    <div className="flex h-[1076px] w-[1918px] flex-col overflow-hidden bg-[#222] font-['Roboto',sans-serif]">
      <Defs />
      <div className="relative z-10"><TitleBar /></div>
      <div className="flex h-[25px] items-center border-y border-black bg-gradient-to-b from-[#282828] to-[#191919] pl-[13px] text-[15px] tracking-[0.25px] text-[#e2e2e2]">
        {MENU.map(([m, w]) => <span key={m} className={`shrink-0 ${w}`}>{m}</span>)}
      </div>
      <div className="flex h-[971px]">
        <LeftPanel />
        <Center />
        <Right />
      </div>
      <Taskbar />
    </div>
  );
}
